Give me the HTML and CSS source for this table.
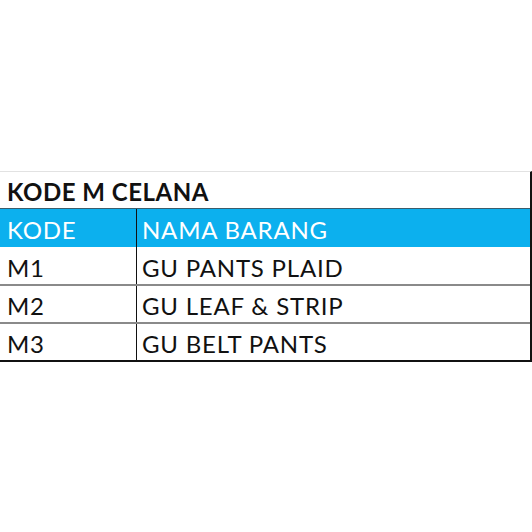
FILE: index.html
```html
<!DOCTYPE html>
<html>
<head>
<meta charset="utf-8">
<link rel="stylesheet" href="styles.css">
</head>
<body>
<div class="sheet">
  <div class="title">KODE M CELANA</div>
  <div class="row head">
    <div class="cell c1">KODE</div>
    <div class="cell c2">NAMA BARANG</div>
  </div>
  <div class="row item first">
    <div class="cell c1">M1</div>
    <div class="cell c2">GU PANTS PLAID</div>
  </div>
  <div class="row item">
    <div class="cell c1">M2</div>
    <div class="cell c2">GU LEAF &amp; STRIP</div>
  </div>
  <div class="row item last">
    <div class="cell c1">M3</div>
    <div class="cell c2">GU BELT PANTS</div>
  </div>
</div>
</body>
</html>
```
FILE: styles.css
```css
*, *::before, *::after {
  box-sizing: border-box;
}
html, body {
  margin: 0;
  padding: 0;
  background: #ffffff;
}
body {
  width: 532px;
  height: 532px;
  overflow: hidden;
  font-family: Lato, "Liberation Sans", sans-serif;
  color: #111;
}
.sheet {
  margin-top: 171px;
  width: 532px;
  border-right: 2px solid #111;
  border-top: 1px solid #e2e2e2;
}
.title {
  height: 36px;
  padding-left: 7px;
  padding-top: 3px;
  font-weight: 700;
  font-size: 24px;
  letter-spacing: 0.5px;
  display: flex;
  align-items: center;
}
.row {
  display: grid;
  grid-template-columns: 137px 1fr;
  font-size: 24px;
  letter-spacing: 0.8px;
}
.cell {
  display: flex;
  align-items: center;
  padding-left: 7px;
  padding-top: 3px;
}
.c1 {
  border-right: 1px solid #111;
}
.c2 {
  padding-left: 5px;
}
.head {
  height: 39px;
  background: #0cb0ee;
  color: #ffffff;
  border-top: 1px solid #3b5d6c;
}
.item {
  height: 38px;
  border-top: 2px solid #8a8a8a;
}
.item.first {
  height: 37px;
  border-top: none;
}
.item.last {
  height: 40px;
  border-bottom: 2px solid #111;
}
```
